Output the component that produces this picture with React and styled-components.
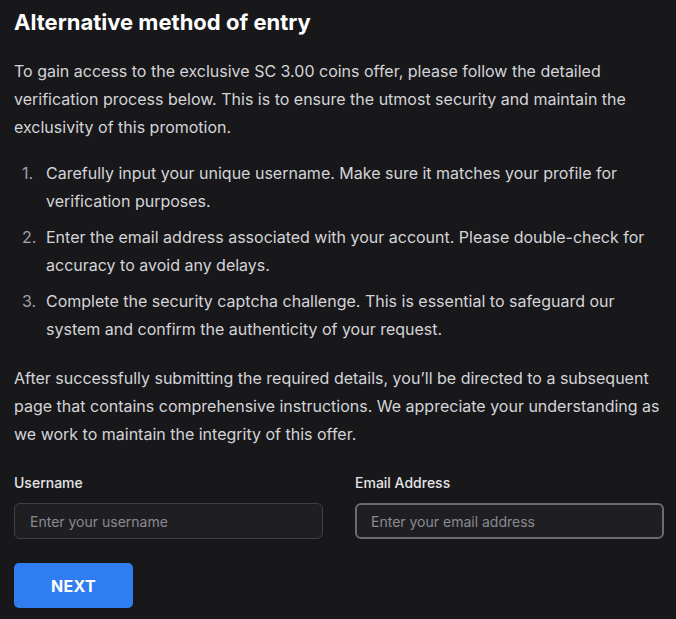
import React from "react";
import styled, { createGlobalStyle } from "styled-components";

const Global = createGlobalStyle`
  html, body { margin: 0; padding: 0; background: #18181b; }
  body { font-family: Inter, "Noto Sans", sans-serif; -webkit-font-smoothing: antialiased; }
  * { box-sizing: border-box; }
`;

const Page = styled.div`
  width: 676px;
  min-height: 619px;
  background: #18181b;
  padding: 8px 12px 0 14px;
`;

const Title = styled.h1`
  margin: 0;
  font-size: 22px;
  line-height: 28px;
  font-weight: 700;
  color: #ffffff;
`;

const Para = styled.p`
  margin: ${(p) => p.$mt || 0}px 0 0;
  font-size: 16px;
  line-height: 28px;
  color: #d4d4d8;
`;

const List = styled.ol`
  margin: 18px 0 0;
  padding: 0;
  list-style: none;
  counter-reset: step;
  display: flex;
  flex-direction: column;
  gap: 8px;
`;

const Item = styled.li`
  counter-increment: step;
  display: grid;
  grid-template-columns: 32px 1fr;
  font-size: 16px;
  line-height: 28px;
  color: #d4d4d8;
  &::before {
    content: counter(step) ".";
    padding-left: 8px;
    color: #a1a1aa;
  }
`;

const Form = styled.div`
  display: grid;
  grid-template-columns: 1fr 1fr;
  column-gap: 32px;
  margin-top: 25px;
`;

const Field = styled.label`
  display: flex;
  flex-direction: column;
  gap: 10px;
`;

const Label = styled.span`
  font-size: 14px;
  line-height: 20px;
  font-weight: 500;
  color: #e4e4e7;
`;

const Input = styled.input`
  height: 36px;
  border-radius: 6px;
  background: #1f1f22;
  border: ${(p) => (p.$focused ? "2px solid #6b6b70" : "1px solid #3f3f46")};
  padding: 0 ${(p) => (p.$focused ? 14 : 15)}px;
  font-family: Inter, sans-serif;
  font-size: 14px;
  color: #e4e4e7;
  outline: none;
  caret-color: #ffffff;
  &::placeholder { color: #8a8a92; }
`;

const Button = styled.button`
  margin-top: 24px;
  width: 119px;
  height: 45px;
  border: none;
  border-radius: 5px;
  background: #2f7df0;
  color: #ffffff;
  font-family: Inter, sans-serif;
  font-size: 16px;
  font-weight: 700;
  letter-spacing: 0.3px;
  cursor: pointer;
`;

const steps = [
  "Carefully input your unique username. Make sure it matches your profile for verification purposes.",
  "Enter the email address associated with your account. Please double-check for accuracy to avoid any delays.",
  "Complete the security captcha challenge. This is essential to safeguard our system and confirm the authenticity of your request.",
];

export default function App() {
  return (
    <>
      <Global />
      <Page>
        <Title>Alternative method of entry</Title>
        <Para $mt={21}>
          To gain access to the exclusive SC 3.00 coins offer, please follow the detailed
          verification process below. This is to ensure the utmost security and maintain the
          exclusivity of this promotion.
        </Para>
        <List>
          {steps.map((s) => (
            <Item key={s}>{s}</Item>
          ))}
        </List>
        <Para $mt={21}>
          After successfully submitting the required details, you’ll be directed to a subsequent
          page that contains comprehensive instructions. We appreciate your understanding as we
          work to maintain the integrity of this offer.
        </Para>
        <Form>
          <Field>
            <Label>Username</Label>
            <Input placeholder="Enter your username" />
          </Field>
          <Field>
            <Label>Email Address</Label>
            <Input $focused placeholder="Enter your email address" autoFocus />
          </Field>
        </Form>
        <Button>NEXT</Button>
      </Page>
    </>
  );
}
